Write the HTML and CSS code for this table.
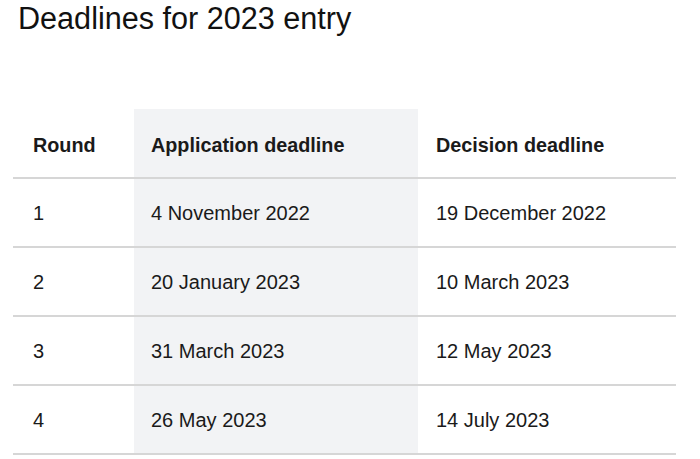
FILE: index.html
```html
<!DOCTYPE html>
<html>
<head>
<meta charset="utf-8">
<link rel="stylesheet" href="styles.css">
</head>
<body>
<h2 class="title">Deadlines for 2023 entry</h2>
<table class="deadlines">
  <thead>
    <tr><th class="c1">Round</th><th class="c2 hl">Application deadline</th><th class="c3">Decision deadline</th></tr>
  </thead>
  <tbody>
    <tr><td>1</td><td class="hl">4 November 2022</td><td>19 December 2022</td></tr>
    <tr><td>2</td><td class="hl">20 January 2023</td><td>10 March 2023</td></tr>
    <tr><td>3</td><td class="hl">31 March 2023</td><td>12 May 2023</td></tr>
    <tr><td>4</td><td class="hl">26 May 2023</td><td>14 July 2023</td></tr>
  </tbody>
</table>
</body>
</html>
```
FILE: styles.css
```css
html, body {
  margin: 0;
  padding: 0;
  background: #fff;
}
body {
  font-family: "Liberation Sans", Arial, sans-serif;
  color: #1a1a1a;
}
.title {
  margin: 0;
  padding: 1px 0 0 18px;
  font-size: 30.6px;
  font-weight: normal;
  line-height: 35px;
  color: #111;
}
.deadlines {
  margin: 73px 0 0 13px;
  width: 663px;
  border-collapse: collapse;
  font-size: 20px;
}
.deadlines th {
  text-align: left;
  font-weight: bold;
  font-size: 19.8px;
  height: 64px;
  padding: 4px 0 0 20px;
  border-bottom: 2px solid #d6d6d6;
}
.deadlines td {
  height: 65px;
  padding: 2px 0 0 20px;
  border-bottom: 2px solid #d6d6d6;
}
.deadlines th.c1 { width: 101px; }
.deadlines th.c2 { width: 267px; padding-left: 17px; }
.deadlines td.hl { padding-left: 17px; }
.hl { background: #f2f3f5; }
.deadlines tr td:last-child, .deadlines tr th:last-child { padding-left: 18px; }
```
